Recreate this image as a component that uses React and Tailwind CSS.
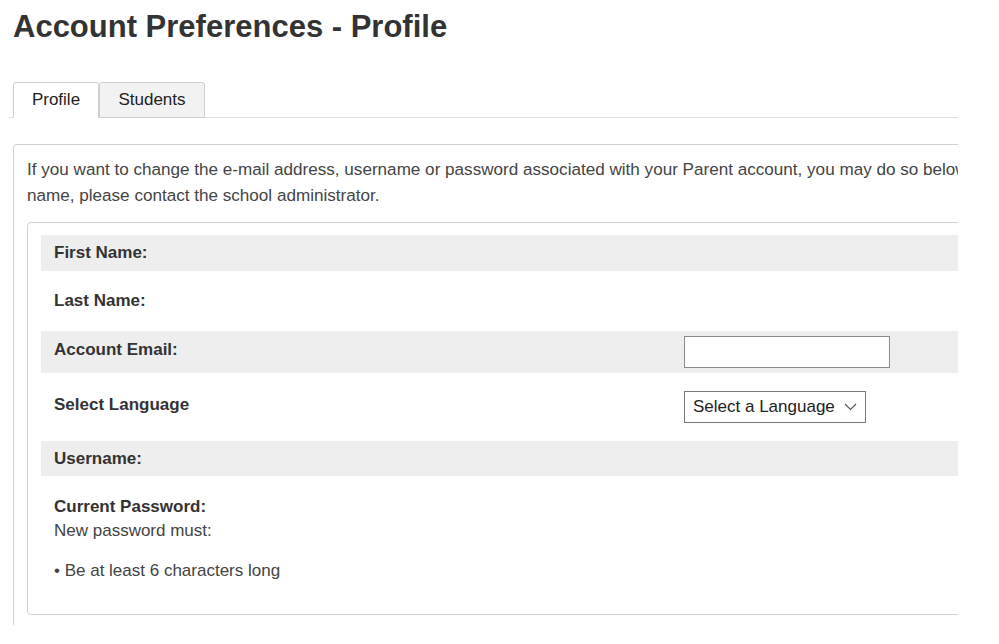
import { useState } from "react";

const rows = [
    { label: "First Name:", shade: true, h: "h-[36px]" },
    { label: "Last Name:", shade: false, h: "h-[60px]" },
    { label: "Account Email:", shade: true, h: "h-[42px]", field: "email" },
    { label: "Select Language", shade: false, h: "h-[68px]", field: "lang" },
    { label: "Username:", shade: true, h: "h-[35px]" },
];

const Chevron = () => (
    <svg width="13" height="8" viewBox="0 0 13 8" fill="none" className="ml-auto">
        <path d="M1 1l5.5 5.5L12 1" stroke="#555" strokeWidth="1.1" />
    </svg>
);

const App = () => {
    const [tab, setTab] = useState("profile");
    const [email, setEmail] = useState("");

    return (
        <div className="w-[958px] overflow-hidden bg-white font-['Liberation_Sans',Arial,sans-serif] text-[#333]">
            <div className="w-[1300px]">
                <h1 className="pt-[10px] pl-[13px] text-[31px] leading-[34px] font-bold text-[#333]">
                    Account Preferences - Profile
                </h1>

                {/* tabs */}
                <div className="mt-[38px] ml-[9px] pl-[4px] flex h-[36px] border-b border-[#dcdcdc]">
                    <button
                        onClick={() => setTab("profile")}
                        className={`h-[36px] w-[86px] flex items-center justify-center text-[17px] text-[#222] border border-[#cfcfcf] rounded-t-[3px] ${tab === "profile" ? "bg-white border-b-white" : "bg-[#f2f2f2]"}`}
                    >
                        Profile
                    </button>
                    <button
                        onClick={() => setTab("students")}
                        className={`h-[36px] w-[106px] flex items-center justify-center text-[17px] text-[#222] border border-[#cfcfcf] rounded-t-[3px] ${tab === "students" ? "bg-white border-b-white" : "bg-[#f2f2f2]"}`}
                    >
                        Students
                    </button>
                </div>

                {/* panel */}
                <div className="mt-[26px] ml-[13px] border-l border-t border-[#d2d2d2] rounded-tl-[4px] pl-[13px] pt-[12px] pb-[10px]">
                    <p className="text-[17.1px] leading-[26px] text-[#444] whitespace-nowrap">
                        If you want to change the e-mail address, username or password associated with your Parent account, you may do so below. If you need to change your
                        <br />
                        name, please contact the school administrator.
                    </p>

                    <div className="mt-[13px] border border-[#d2d2d2] rounded-[4px] px-[13px] pt-[12px] pb-[31px]">
                        {rows.map((r) => (
                            <div key={r.label} className={`${r.h} flex items-center ${r.shade ? "bg-[#eeeeee]" : ""}`}>
                                <div className={`w-[643px] pl-[13px] text-[17px] font-bold text-[#333] ${r.field ? "pb-[5px]" : ""}`}>{r.label}</div>
                                {r.field === "email" && (
                                    <input
                                        value={email}
                                        onChange={(e) => setEmail(e.target.value)}
                                        className="w-[206px] h-[32px] bg-white border border-[#8a8a8a] px-2 text-[16px] outline-none"
                                    />
                                )}
                                {r.field === "lang" && (
                                    <div className="w-[182px] h-[32px] bg-white border border-[#7a7a7a] flex items-center pl-[8px] pr-[8px] text-[17px] text-[#222]">
                                        Select a Language
                                        <Chevron />
                                    </div>
                                )}
                            </div>
                        ))}

                        <div className="pl-[13px] pt-[19px] text-[17px]">
                            <div className="font-bold leading-[24px] text-[#333]">Current Password:</div>
                            <div className="leading-[24px] text-[#444]">New password must:</div>
                            <div className="mt-[16px] leading-[24px] text-[#444]">• Be at least 6 characters long</div>
                        </div>
                    </div>
                </div>
            </div>
        </div>
    );
};

export default App;
